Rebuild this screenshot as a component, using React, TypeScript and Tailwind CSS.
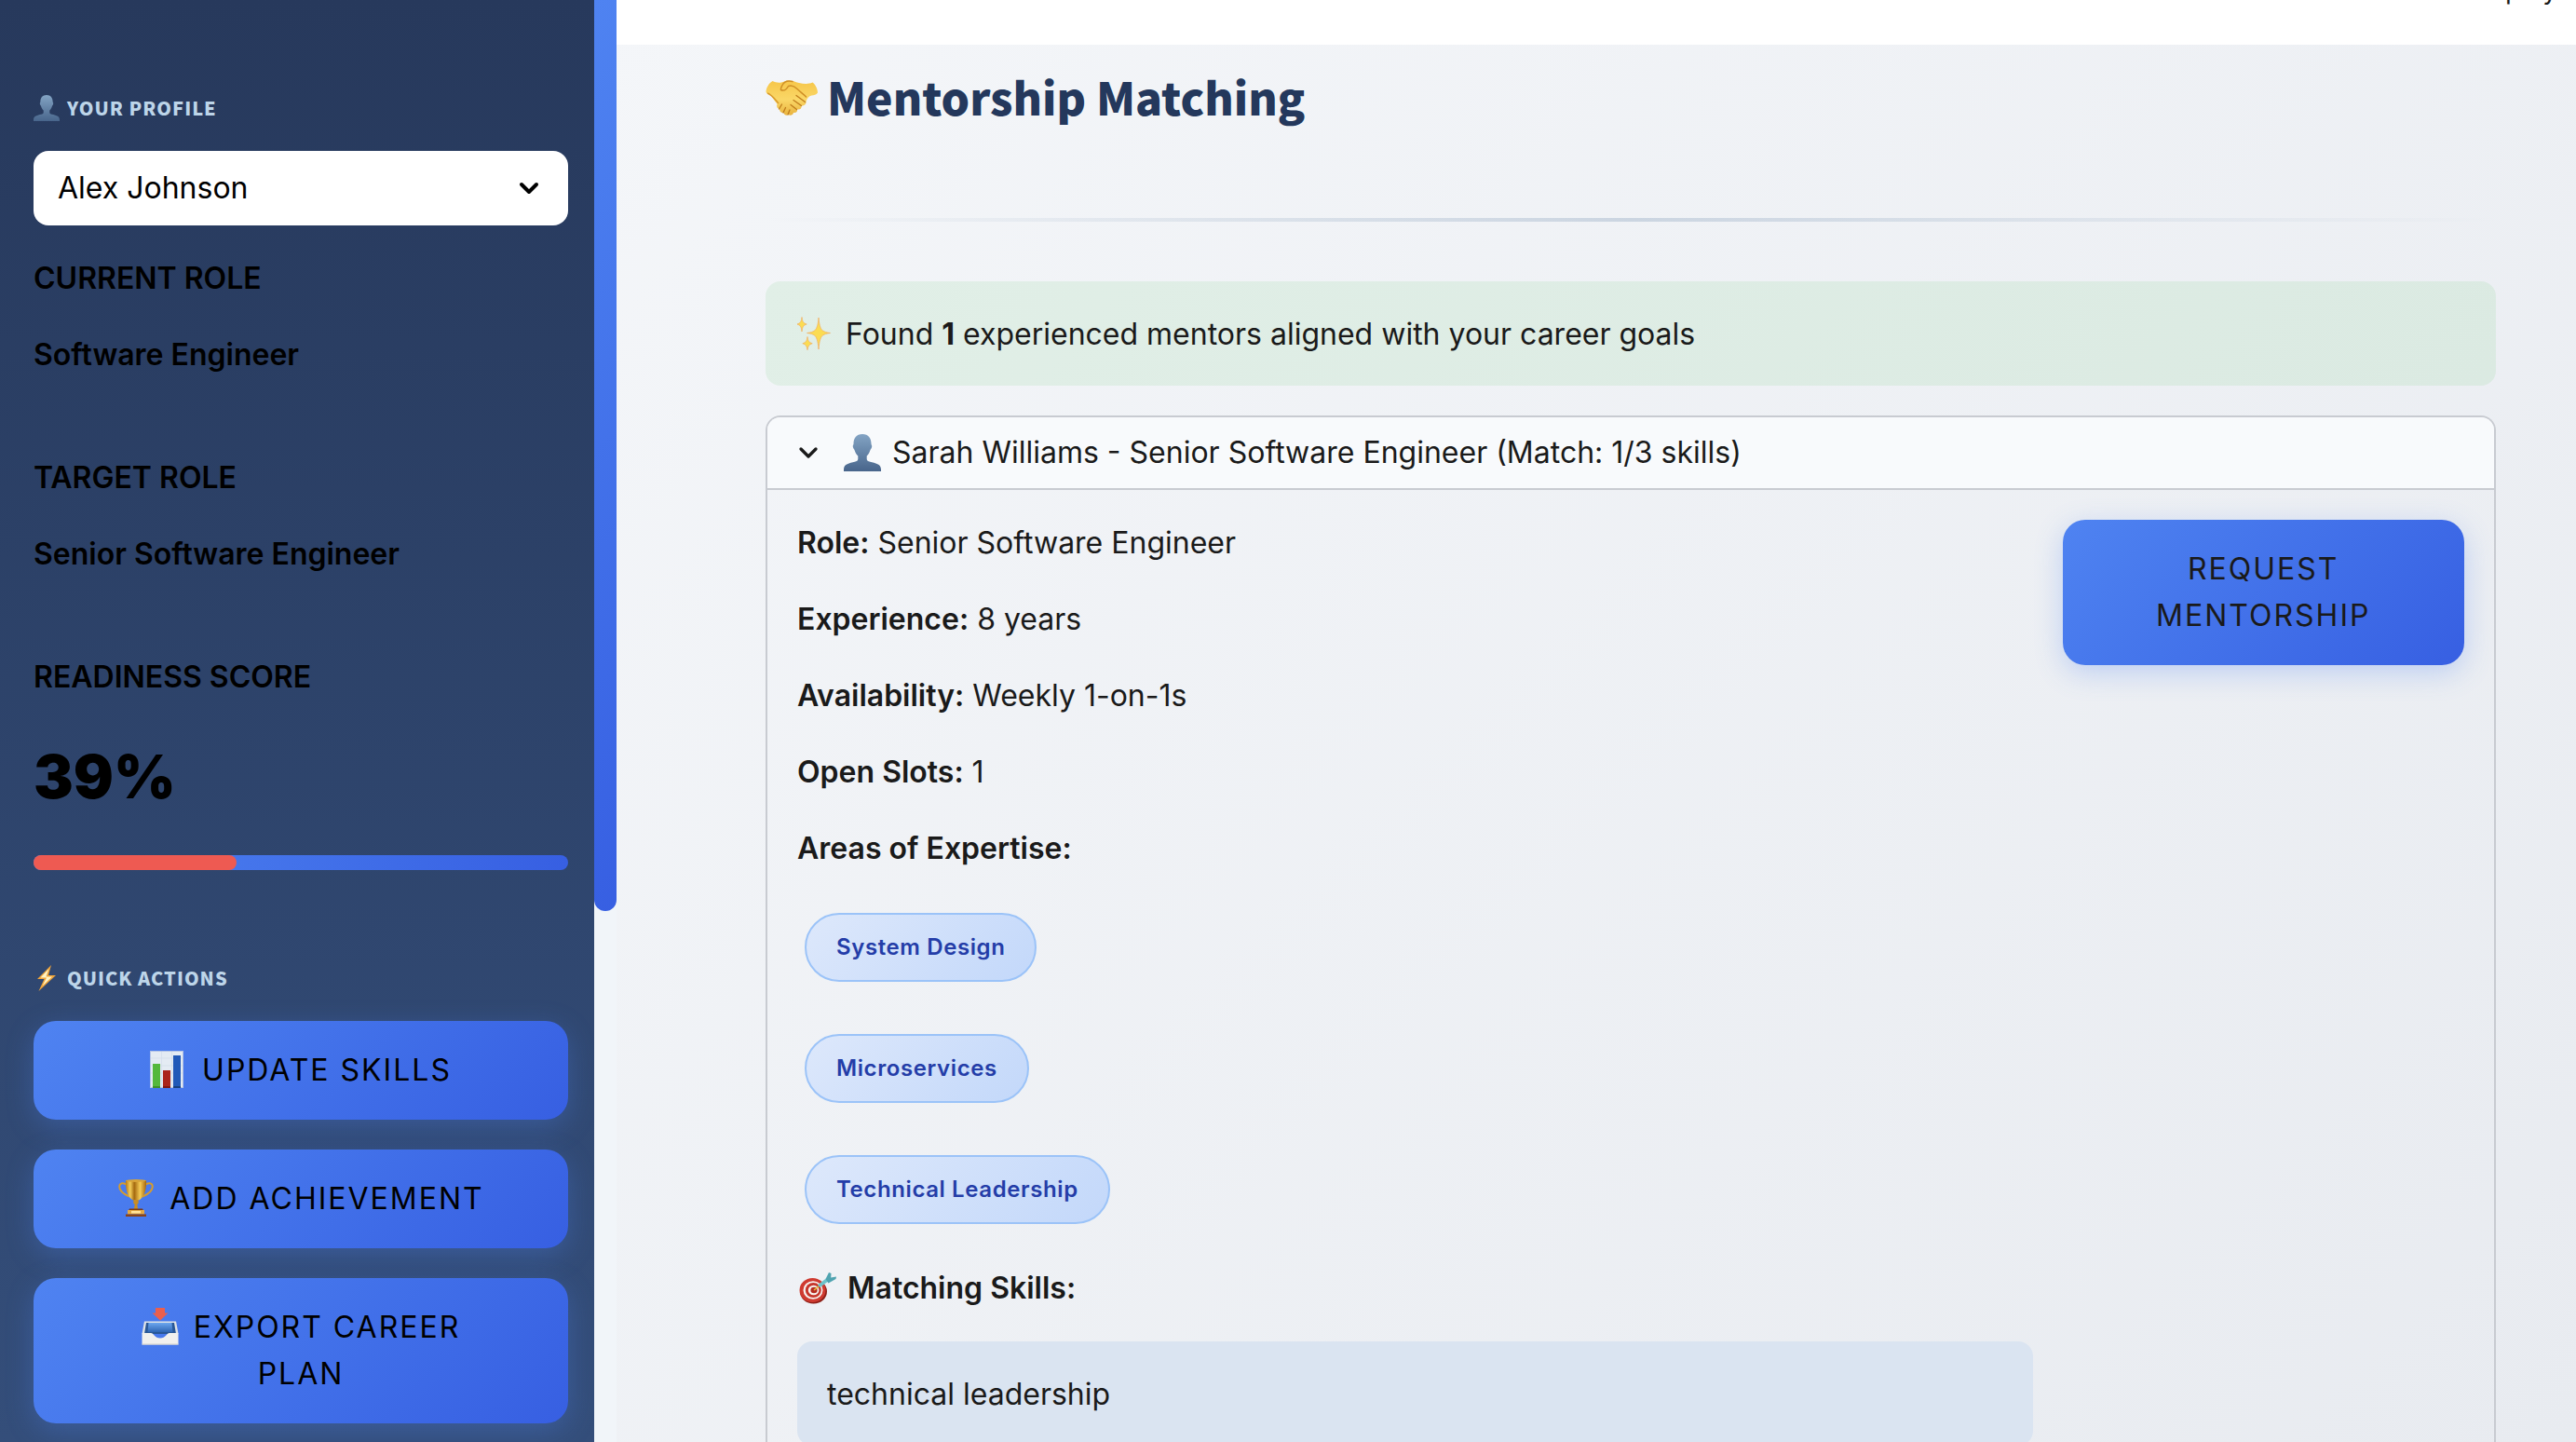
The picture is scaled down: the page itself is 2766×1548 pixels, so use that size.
import { type ReactNode, type SVGProps } from "react";
import { ChevronDown } from "lucide-react";

type IconProps = SVGProps<SVGSVGElement>;

function PersonIcon(props: IconProps) {
  return (
    <svg viewBox="0 0 40 40" aria-hidden="true" {...props}>
      <defs>
        <linearGradient id="person" x1="0" y1="0" x2="0" y2="1">
          <stop offset="0" stopColor="#83a4c4" />
          <stop offset="1" stopColor="#48658b" />
        </linearGradient>
      </defs>
      <path
        fill="url(#person)"
        d="M20 0c6.500 0 9.500 4.500 9.500 10.500 0 1 .9 1.300.7 3-.2 1.700-1.200 2.500-1.600 3.200-.8 3-2.300 5.300-3.900 6.900v3.200c0 1.600 1.300 2.400 3.600 3 5.500 1.500 11.700 2.200 11.700 8.200v2H0v-2c0-6 6.200-6.700 11.700-8.200 2.300-.6 3.600-1.400 3.600-3v-3.200c-1.600-1.600-3.100-3.900-3.900-6.900-.4-.7-1.400-1.500-1.600-3.200-.2-1.700.7-2 .7-3C10.500 4.500 13.500 0 20 0Z"
      />
    </svg>
  );
}

function BoltIcon(props: IconProps) {
  return (
    <svg viewBox="0 0 20 28" aria-hidden="true" {...props}>
      <path d="M15 0 0 15h7.500L1.500 28 20 11h-8Z" fill="#f0a53a" />
      <path d="M12.500 4 3.500 13.500H10L5.500 22.500 16 12.500H9.500Z" fill="#fff3c4" />
    </svg>
  );
}

function ChartIcon(props: IconProps) {
  return (
    <svg viewBox="0 0 36 40" aria-hidden="true" {...props}>
      <rect width="36" height="40" fill="#b3c3e6" />
      <rect x="1" y="1" width="34" height="38" fill="#e4ebf3" />
      <path d="M1 8h34M1 16h34M1 24h34M1 32h34M12.500 1v38M23.500 1v38" stroke="#d3dde9" strokeWidth=".7" />
      <rect x="3" y="14" width="8" height="26" fill="#55b83c" />
      <rect x="14" y="21" width="8" height="19" fill="#ab2419" />
      <rect x="25" y="5" width="8" height="35" fill="#2159b8" />
      <path d="M3 38h8v2H3Z" fill="#3e9029" />
      <path d="M14 38h8v2h-8Z" fill="#7f1710" />
      <path d="M25 38h8v2h-8Z" fill="#17407f" />
    </svg>
  );
}

function TrophyIcon(props: IconProps) {
  return (
    <svg viewBox="0 0 38 40" aria-hidden="true" {...props}>
      <defs>
        <linearGradient id="cup" x1="0" x2="1">
          <stop offset="0" stopColor="#b97915" />
          <stop offset=".22" stopColor="#f3ce5a" />
          <stop offset=".42" stopColor="#a5690f" />
          <stop offset=".7" stopColor="#f5cb55" />
          <stop offset="1" stopColor="#a3640c" />
        </linearGradient>
      </defs>
      <path
        d="M9.500 6C5.500 3 1.500 4 1.200 7.500 1 13 6 16 12 18.500M28.500 6c4-3 8-2 8.300 1.500C37 13 32 16 26 18.500"
        fill="none"
        stroke="#d59b2f"
        strokeWidth="2"
      />
      <path d="M8 1h22c.5 9-1.500 18-8 21.500h-6C9.500 19 7.500 10 8 1Z" fill="url(#cup)" />
      <ellipse cx="19" cy="1.500" rx="11" ry="1.500" fill="#d9a437" />
      <path d="M16.500 22h5l.3 3.500-1.500 1.500.8 5h-4.200l.8-5-1.500-1.500Z" fill="#c98d22" />
      <path d="M12 31.500h14l1 2H11Z" fill="#7b3a17" />
      <path d="M10 33h18v4.500H10Z" fill="#e5aa43" />
      <path d="M14 34h10v2.500H14Z" fill="#ffe39a" />
      <path d="M8 37.500h22V40H8Z" fill="#8a4317" />
    </svg>
  );
}

function InboxIcon(props: IconProps) {
  return (
    <svg viewBox="0 0 40 40" aria-hidden="true" {...props}>
      <defs>
        <linearGradient id="tray" x1="0" y1="0" x2="0" y2="1">
          <stop offset="0" stopColor="#6ca7ef" />
          <stop offset="1" stopColor="#2f66b4" />
        </linearGradient>
      </defs>
      <path d="M3 14.500h34l2.500 13H.5Z" fill="#dfe3e6" />
      <path d="M5 16h30l2 12H3Z" fill="#295796" />
      <path d="M7.500 16h25l1 10h-27Z" fill="url(#tray)" />
      <path d="M.5 27H10c3 0 4 5.500 10 5.500S27 27 30 27h9.500v12.500H.5Z" fill="#f1f0ee" />
      <path d="M.5 38.500h39v1H.5Z" fill="#cfcdca" />
      <path d="M15 0h10v5.500h3.500L20 13.500 11.500 5.500H15Z" fill="#ea5f4e" />
    </svg>
  );
}

function HandshakeIcon(props: IconProps) {
  return (
    <svg viewBox="0 0 56 40" aria-hidden="true" {...props}>
      <defs>
        <linearGradient id="hand" x1="0" y1="0" x2="0" y2="1">
          <stop offset="0" stopColor="#f6c64a" />
          <stop offset=".55" stopColor="#fad767" />
          <stop offset="1" stopColor="#e9b33f" />
        </linearGradient>
      </defs>
      <path
        d="M7.500 2C4 4 .5 9 .5 14c1 2 3.500 2.500 5.500 4 2.500 3 4 6 6.500 8.500-1 3 0 5 2.500 5.500 0 3 2 4.500 4.500 4 .5 2.500 3 3.500 5 2 2 1.500 5 .5 5.500-2 3 .5 4.500-1.500 4-3.500 3.500.5 5-1.500 4.500-4 3.500 0 5.500-2 5-4.500 1-3 3-6 6-6.500 2.500-.3 5-.5 6.500-3C56 11 54 6 50.500 3.500 46 5.500 41 5 36 4 31 2.500 28 1 23.500 1.500c-2.500.3-4 1.500-6.500 2-3.500.5-6.500 0-9.500-1.500Z"
        fill="url(#hand)"
      />
      <path
        d="M29 2.500c-6-1.500-9 0-11 4-1 2-2 3.500-1.500 5 3 1.500 6-.5 8-4 4-1.500 7 .5 9.500 3 3.500 3.500 7 5.500 9.500 8.500"
        fill="none"
        stroke="#cf8f26"
        strokeWidth="1.500"
        strokeLinecap="round"
      />
      <path
        d="m33 17.500 9.500 7M30 22.500l8.500 6M27 27.500l6.500 5M14.500 32l3-5M19 36l2.500-5.500M24 38l2-5"
        fill="none"
        stroke="#bf7c1c"
        strokeWidth="1.300"
        strokeLinecap="round"
      />
      <path d="M2 15c4 1 7 5 12 11" fill="none" stroke="#d99a2d" strokeWidth="1.500" />
    </svg>
  );
}

function SparklesIcon(props: IconProps) {
  return (
    <svg viewBox="0 0 36 36" aria-hidden="true" {...props}>
      <g fill="#fbdc52" stroke="#f0ad62" strokeWidth=".7">
        <path d="M23 1c.8 9.500 2.500 12.500 4.500 14 1.800 1.300 4 2 8 2.500-4 .5-6.200 1.200-8 2.500-2 1.500-3.700 5-4.500 15-.8-10-2.500-13.500-4.500-15-1.800-1.300-4-2-8-2.500 4-.5 6.200-1.200 8-2.500 2-1.500 3.700-4.500 4.500-14Z" />
        <path d="M5 .5c.6 5 1.800 6.500 5.200 7.500C6.800 9 5.600 10.800 5 16 4.400 10.800 3.200 9-.2 8 3.200 7 4.400 5.500 5 .5Z" />
        <path d="M11 21.500c.6 4.500 1.800 6.200 5.200 7.200-3.400 1-4.600 2.700-5.200 7-.6-4.300-1.800-6-5.200-7 3.400-1 4.600-2.700 5.200-7.200Z" />
      </g>
    </svg>
  );
}

function TargetIcon(props: IconProps) {
  return (
    <svg viewBox="0 0 40 34" aria-hidden="true" {...props}>
      <ellipse cx="15.500" cy="20.500" rx="14.500" ry="13" fill="#8e2018" />
      <ellipse cx="14.500" cy="19" rx="14" ry="13" fill="#cf3a30" />
      <ellipse cx="15" cy="19" rx="10.500" ry="9.800" fill="#f7f3f0" />
      <ellipse cx="15.300" cy="19" rx="8.500" ry="8" fill="#c6352b" />
      <ellipse cx="15.600" cy="19" rx="5.800" ry="5.300" fill="#f7f3f0" />
      <ellipse cx="16" cy="19" rx="3.600" ry="3.300" fill="#b52a21" />
      <path d="m16 19 5-4" stroke="#e4c13c" strokeWidth="1.600" />
      <path d="m20 13.500 9.500-7.500 2.500 3-9.500 7Z" fill="#6cc3cb" />
      <path d="m28.500 7 3.500-7 2.500 1-.3 4.500L40 4.500l-.5 2.500-8 4.500Z" fill="#4fa3b0" />
    </svg>
  );
}

const heading = "font-['Noto_Sans_CJK_JP','Noto_Sans',sans-serif] font-black";

function SidebarHeading({ icon, children }: { icon: ReactNode; children: ReactNode }) {
  return (
    <h3 className={`${heading} flex items-center gap-2 text-[20px] leading-6 tracking-[1px] text-[#bdd5e9]`}>
      <span className="flex w-7 justify-center">{icon}</span>
      {children}
    </h3>
  );
}

function ActionButton({ icon, children }: { icon?: ReactNode; children: ReactNode }) {
  return (
    <button
      type="button"
      className="w-full rounded-3xl bg-linear-135 from-[#4f83f1] to-[#375fe2] px-20 py-7 text-center leading-[50px] tracking-[2px] uppercase shadow-[0_8px_30px_rgba(79,131,241,0.3)]"
    >
      {icon}
      {children}
    </button>
  );
}

function ProfileField({ label, value }: { label: string; value: string }) {
  return (
    <div className="flex flex-col gap-8 font-semibold">
      <p>{label}</p>
      <p>{value}</p>
    </div>
  );
}

function Sidebar() {
  return (
    <aside className="flex w-[638px] shrink-0 flex-col bg-linear-to-b from-[#27395c] to-[#344e7a] px-9 pr-7 pt-[102px] leading-[50px] text-black">
      <SidebarHeading icon={<PersonIcon className="h-7 w-7" />}>YOUR PROFILE</SidebarHeading>
      <div className="relative mt-8">
        <select
          aria-label="Your profile"
          defaultValue="Alex Johnson"
          className="block h-20 w-full appearance-none rounded-2xl bg-white px-[26px]"
        >
          <option>Alex Johnson</option>
        </select>
        <ChevronDown className="pointer-events-none absolute top-6 right-[26px] size-8" strokeWidth={3} />
      </div>
      <div className="mt-8 flex flex-col gap-[82px]">
        <ProfileField label="CURRENT ROLE" value="Software Engineer" />
        <ProfileField label="TARGET ROLE" value="Senior Software Engineer" />
        <p className="font-semibold">READINESS SCORE</p>
      </div>
      <p className="mt-[50px] text-[64px] leading-16 font-black">39%</p>
      <div
        role="progressbar"
        aria-label="Readiness score"
        aria-valuenow={39}
        className="mt-[52px] h-4 rounded-lg bg-linear-to-r from-[#4f83f1] to-[#375fe2]"
      >
        <div className="h-full w-[38%] rounded-lg bg-[#ee5a52]" />
      </div>
      <div className="mt-[102px]">
        <SidebarHeading icon={<BoltIcon className="h-7 w-5" />}>QUICK ACTIONS</SidebarHeading>
      </div>
      <div className="mt-8 flex flex-col gap-8">
        <ActionButton icon={<ChartIcon className="mr-5 inline h-10 w-9 align-[-8px]" />}>Update Skills</ActionButton>
        <ActionButton icon={<TrophyIcon className="mr-4 inline h-10 w-10 align-[-8px]" />}>Add Achievement</ActionButton>
        <ActionButton icon={<InboxIcon className="mr-4 inline h-10 w-10 align-[-8px]" />}>Export Career Plan</ActionButton>
      </div>
    </aside>
  );
}

const details = [
  ["Role:", "Senior Software Engineer"],
  ["Experience:", "8 years"],
  ["Availability:", "Weekly 1-on-1s"],
  ["Open Slots:", "1"],
  ["Areas of Expertise:", ""],
];

const expertise = ["System Design", "Microservices", "Technical Leadership"];

function MentorCard() {
  return (
    <details open className="mt-8 rounded-t-2xl border-2 border-b-0 border-[#c8cbd1]">
      <summary className="box-content flex h-[76px] list-none items-center rounded-t-[14px] border-b-2 border-[#c8cbd1] bg-[#f8fafc] pl-7">
        <ChevronDown className="size-8" strokeWidth={2.500} />
        <PersonIcon className="mr-3 ml-[22px] h-10 w-10" />
        Sarah Williams - Senior Software Engineer (Match: 1/3 skills)
      </summary>
      <div className="flex items-start gap-8 p-8 pb-0">
        <div className="w-[calc(75%-16px)]">
          <div className="flex flex-col gap-8">
            {details.map(([label, value]) => (
              <p key={label}>
                <strong className="font-semibold">{label}</strong> {value}
              </p>
            ))}
          </div>
          <ul className="mt-11 ml-2 flex flex-col items-start gap-14">
            {expertise.map((skill) => (
              <li
                key={skill}
                className="rounded-[40px] border-2 border-[#9bc3f8] bg-linear-135 from-[#dde8fb] to-[#c3d8fa] px-8 py-4 text-[24px] leading-[38px] font-semibold tracking-wide text-[#243da8]"
              >
                {skill}
              </li>
            ))}
          </ul>
          <p className="mt-11 flex items-center font-semibold">
            <TargetIcon className="mr-3 ml-[2px] h-[34px] w-10" />
            Matching Skills:
          </p>
          <div className="mt-8 h-28 rounded-2xl bg-[#dae4f1] px-8 pt-8">technical leadership</div>
        </div>
        <div className="w-[calc(25%-16px)]">
          <ActionButton>Request Mentorship</ActionButton>
        </div>
      </div>
    </details>
  );
}

export default function App() {
  return (
    <div className="flex h-screen overflow-hidden font-['Inter','Liberation_Sans',sans-serif] text-[32px] leading-[50px] text-[#1a1a1a]">
      <Sidebar />
      <div className="w-6 shrink-0 bg-[#f1f5f9]" aria-hidden="true">
        <div className="h-[978px] rounded-b-xl bg-linear-135 from-[#4f83f1] to-[#375fe2]" />
      </div>
      <div className="flex min-w-0 flex-1 flex-col bg-linear-135 from-[#f4f6f9] to-[#e8ebf0]">
        <header className="flex h-12 shrink-0 items-start justify-end overflow-hidden bg-white px-5">
          <button type="button" className="-mt-[25px] text-[28px] leading-7">
            Deploy
          </button>
        </header>
        <main className="pt-5 pr-[86px] pl-40">
          <h1 className={`${heading} flex items-center gap-[10px] text-[48px] leading-[70px] text-[#24385c]`}>
            <HandshakeIcon className="mt-1 h-10 w-14" />
            Mentorship Matching
          </h1>
          <hr className="mt-24 h-1 border-0 bg-linear-to-r from-transparent via-[#cbd5e1] to-transparent" />
          <div className="mt-16 flex h-28 items-start rounded-2xl bg-linear-135 from-[#e1efe7] to-[#dbeae2] px-[34px] pt-8">
            <SparklesIcon className="mt-[6px] mr-4 h-9 w-9" />
            <p>
              Found <strong>1</strong> experienced mentors aligned with your career goals
            </p>
          </div>
          <MentorCard />
        </main>
      </div>
    </div>
  );
}
